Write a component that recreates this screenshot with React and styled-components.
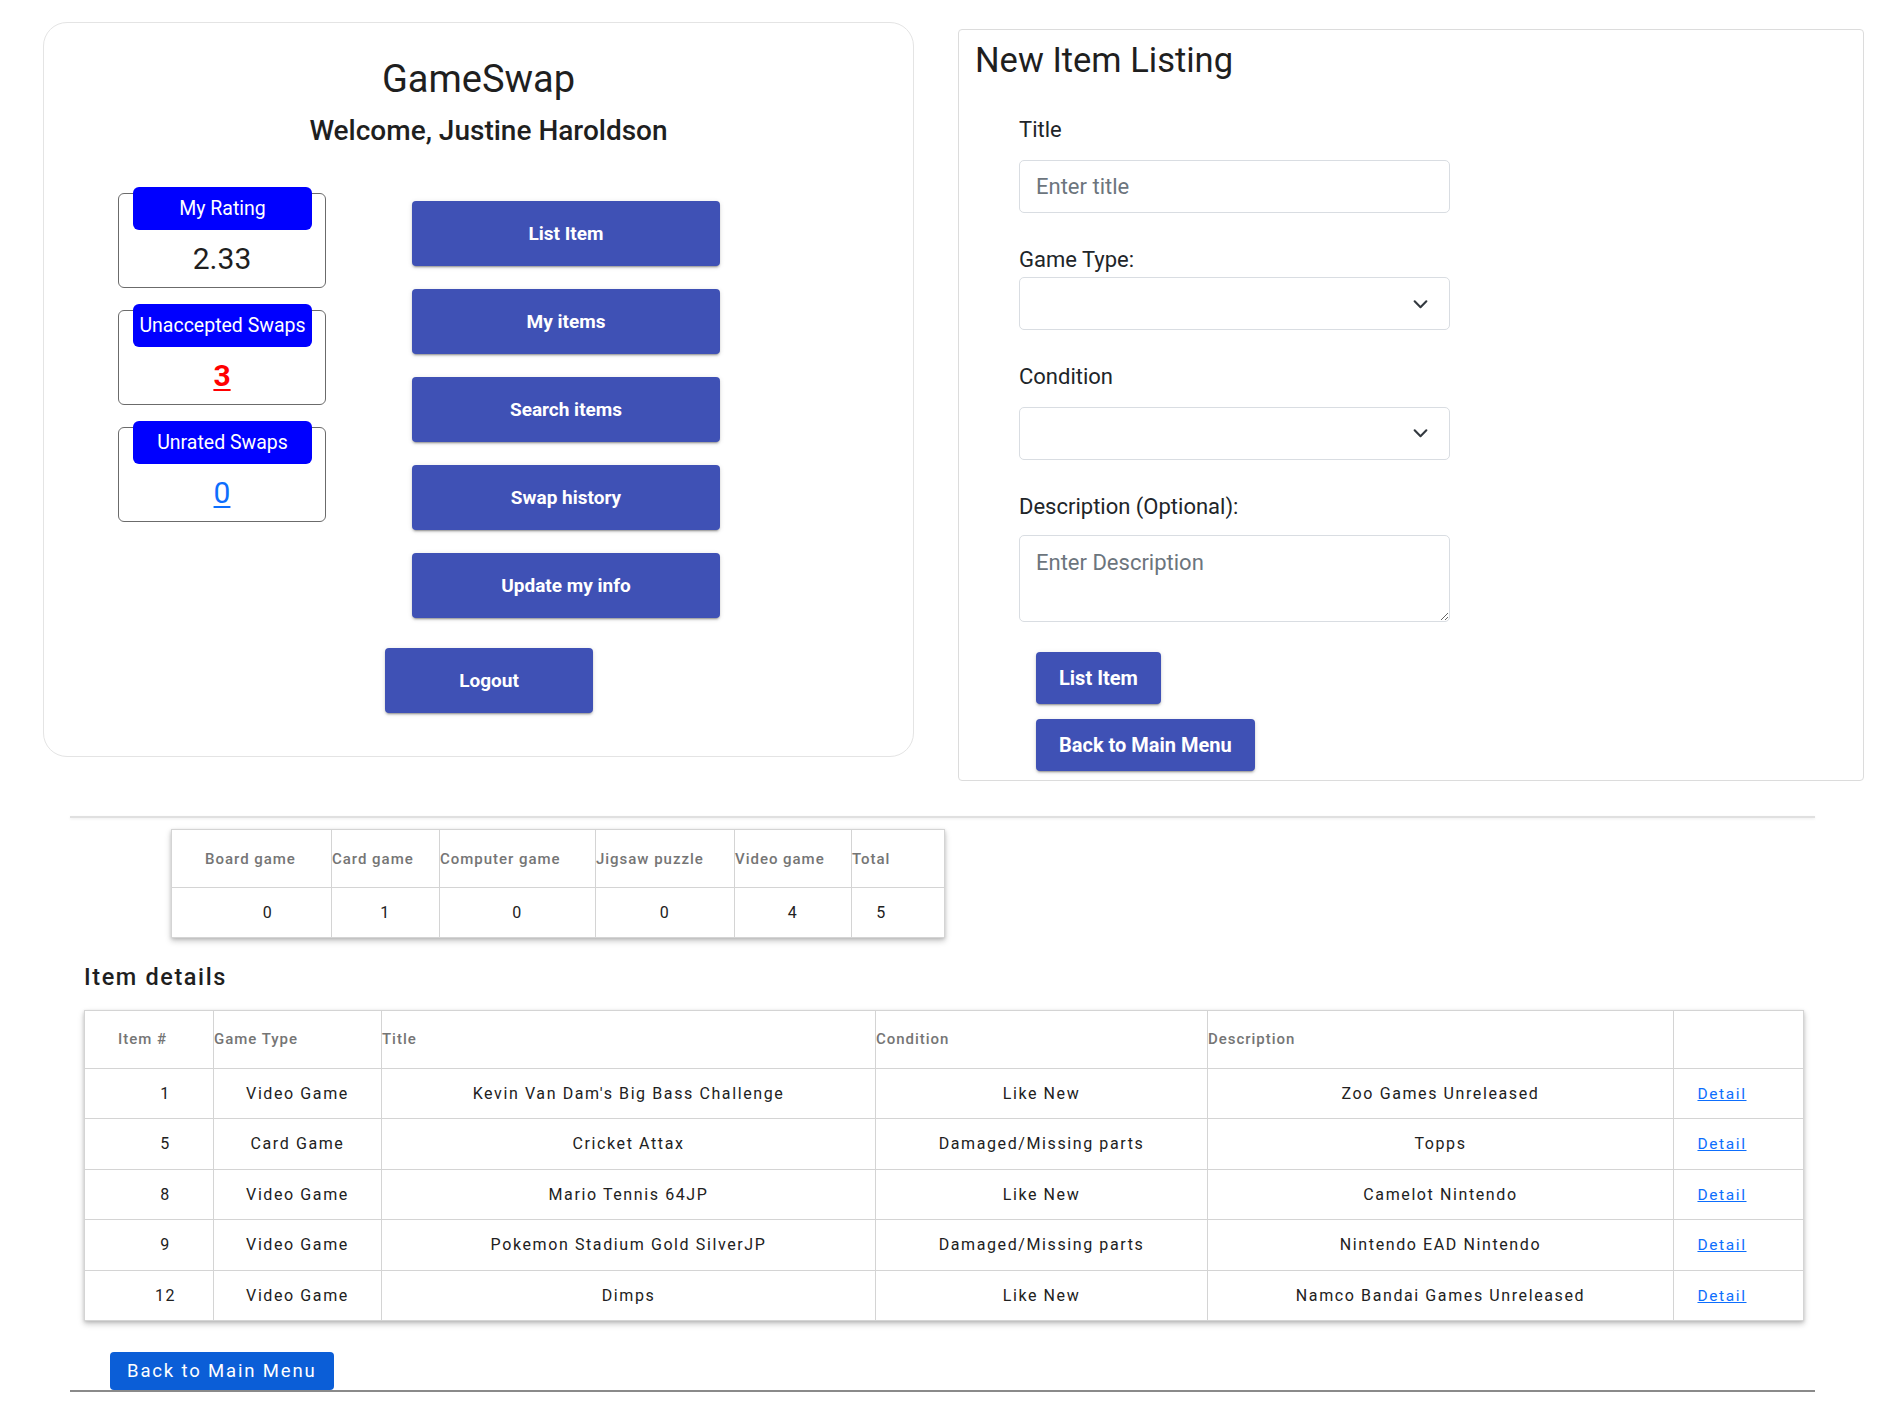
import React from 'react';
import styled, { createGlobalStyle } from 'styled-components';

const GlobalStyle = createGlobalStyle`
  html, body { margin: 0; padding: 0; background: #ffffff; }
  body {
    font-family: Roboto, "Noto Sans", "Liberation Sans", sans-serif;
    color: #212529;
  }
  *, *::before, *::after { box-sizing: border-box; }
`;

const Page = styled.div`
  width: 1890px;
  padding-bottom: 20px;
`;

const TopRow = styled.div`
  display: flex;
  align-items: flex-start;
  gap: 44px;
  padding: 22px 0 0 43px;
`;

/* ---------- left menu card ---------- */
const MenuCard = styled.section`
  width: 871px;
  height: 735px;
  border: 1px solid #e4e4e4;
  border-radius: 24px;
  padding-top: 34px;
  display: flex;
  flex-direction: column;
`;

const AppTitle = styled.h1`
  margin: 0;
  font-size: 38px;
  font-weight: 400;
  line-height: 1.2;
  text-align: center;
  color: #1f1f1f;
`;

const Welcome = styled.h2`
  margin: 11px 0 0 20px;
  font-size: 28px;
  font-weight: 500;
  line-height: 1.2;
  text-align: center;
  color: #1f1f1f;
`;

const MenuBody = styled.div`
  display: flex;
  align-items: flex-start;
  margin-top: 46px;
  padding-left: 74px;
`;

const StatColumn = styled.div`
  display: flex;
  flex-direction: column;
  gap: 22px;
`;

const StatBox = styled.div`
  width: 208px;
  height: 95px;
  border: 1.5px solid #6b6b6b;
  border-radius: 6px;
  display: flex;
  flex-direction: column;
  align-items: flex-start;
`;

const StatLabel = styled.div`
  margin: -7.5px 0 0 14px;
  width: 179px;
  height: 43px;
  background: #0000ff;
  color: #ffffff;
  border-radius: 6px;
  font-size: 19.5px;
  white-space: nowrap;
  display: flex;
  align-items: center;
  justify-content: center;
`;

const StatValue = styled.div`
  align-self: stretch;
  margin-top: 11px;
  text-align: center;
  font-size: 30px;
  line-height: 1.2;
  color: #1f1f1f;
`;

const StatLink = styled.span`
  color: ${(p) => p.$color};
  font-weight: ${(p) => (p.$bold ? 700 : 400)};
  text-decoration: underline;
  text-decoration-thickness: 2px;
  text-underline-offset: 3px;
`;

const ButtonColumn = styled.div`
  display: flex;
  flex-direction: column;
  gap: 23px;
  margin: 8px 0 0 86px;
`;

const RaisedButton = styled.button`
  display: flex;
  align-items: center;
  justify-content: center;
  width: ${(p) => (p.$width ? `${p.$width}px` : 'auto')};
  height: ${(p) => p.$height || 65}px;
  padding: 0 23px;
  background: #3f51b5;
  color: #ffffff;
  border: 0;
  border-radius: 4px;
  font-family: inherit;
  font-size: ${(p) => p.$size || 19}px;
  font-weight: 700;
  cursor: pointer;
  box-shadow: 0 3px 1px -2px rgba(0, 0, 0, 0.2), 0 2px 2px 0 rgba(0, 0, 0, 0.14),
    0 1px 5px 0 rgba(0, 0, 0, 0.12);
`;

const LogoutRow = styled.div`
  margin: 30px 0 0 341px;
`;

/* ---------- right form card ---------- */
const FormCard = styled.section`
  width: 906px;
  height: 752px;
  margin-top: 7px;
  border: 1px solid #dcdcdc;
  border-radius: 4px;
  padding: 10px 0 0 16px;
`;

const FormTitle = styled.h2`
  margin: 0;
  font-size: 34.5px;
  font-weight: 400;
  line-height: 1.2;
  color: #1f1f1f;
`;

const Form = styled.form`
  display: flex;
  flex-direction: column;
  align-items: flex-start;
  padding-left: 44px;
`;

const FieldLabel = styled.label`
  display: block;
  margin-top: ${(p) => p.$top}px;
  margin-bottom: ${(p) => p.$bottom}px;
  font-size: 22px;
  line-height: 1.2;
  color: #212529;
`;

const TextInput = styled.input`
  display: block;
  width: 431px;
  height: 53px;
  border: 1px solid #d9dde2;
  border-radius: 5px;
  padding: 0 16px;
  font-family: inherit;
  font-size: 22px;
  color: #212529;
  background: #fff;
  &::placeholder { color: #6c757d; }
`;

const SelectWrap = styled.div`
  position: relative;
  width: 431px;
  height: 53px;
`;

const NativeSelect = styled.select`
  appearance: none;
  -webkit-appearance: none;
  display: block;
  width: 100%;
  height: 100%;
  border: 1px solid #d9dde2;
  border-radius: 5px;
  padding: 0 16px;
  background: #fff;
  font-family: inherit;
  font-size: 22px;
`;

const Chevron = styled.svg`
  position: absolute;
  right: 21px;
  top: 50%;
  width: 17px;
  height: 17px;
  transform: translateY(-50%);
  pointer-events: none;
`;

const TextArea = styled.textarea`
  display: block;
  width: 431px;
  height: 87px;
  border: 1px solid #d9dde2;
  border-radius: 5px;
  padding: 10px 16px 8px;
  font-family: inherit;
  font-size: 22px;
  line-height: 1.5;
  resize: vertical;
  &::placeholder { color: #6c757d; }
`;

const FormButtons = styled.div`
  display: flex;
  flex-direction: column;
  align-items: flex-start;
  gap: 15px;
  margin: 30px 0 0 17px;
`;

/* ---------- bottom report ---------- */
const Report = styled.div`
  width: 1745px;
  margin: 35px 0 0 70px;
  letter-spacing: 0.1em;
`;

const SoftRule = styled.div`
  height: 2px;
  background: #e0e0e0;
  box-shadow: 0 1px 3px rgba(0, 0, 0, 0.08);
`;

const GridTable = styled.table`
  border-collapse: collapse;
  table-layout: fixed;
  width: ${(p) => p.$width}px;
  margin: ${(p) => p.$margin};
  background: #fff;
  box-shadow: 0 3px 6px rgba(0, 0, 0, 0.22), 0 1px 3px rgba(0, 0, 0, 0.12);

  th, td {
    border: 1px solid #d4d4d4;
    padding: 0;
  }
  th:first-child, td:first-child { padding-left: 33px; }
  th:last-child, td:last-child { padding-right: 33px; }
`;

const HeadRow = styled.tr`
  height: 58px;
`;

const HeadCell = styled.th`
  text-align: left;
  font-size: 15px;
  font-weight: 500;
  color: #757575;
  letter-spacing: 0.065em;
  white-space: nowrap;
`;

const BodyRow = styled.tr`
  height: ${(p) => p.$height}px;
`;

const BodyCell = styled.td`
  text-align: center;
  font-size: 16px;
  color: #212121;
  white-space: nowrap;
`;

const DetailLink = styled.a`
  color: #0d6efd;
  text-decoration: underline;
  font-size: 15.5px;
  cursor: pointer;
`;

const SectionHeading = styled.h3`
  margin: 25px 0 0 14px;
  font-size: 23.5px;
  font-weight: 500;
  line-height: 1.2;
  color: #1f1f1f;
`;

const PrimaryButton = styled.button`
  display: block;
  height: 38px;
  margin: 31px 0 0 40px;
  padding: 0 17px;
  background: #0b5ed7;
  color: #fff;
  border: 0;
  border-radius: 4px;
  font-family: inherit;
  font-size: 18.5px;
  letter-spacing: 0.1em;
  cursor: pointer;
`;

const BottomRule = styled.div`
  height: 2px;
  background: #8a8a8a;
`;

const summaryCols = [160, 108, 156, 139, 117, 93];
const summaryHead = ['Board game', 'Card game', 'Computer game', 'Jigsaw puzzle', 'Video game', 'Total'];
const summaryRow = [0, 1, 0, 0, 4, 5];

const itemCols = [129, 168, 494, 332, 466, 130];
const itemHead = ['Item #', 'Game Type', 'Title', 'Condition', 'Description', ''];
const items = [
  [1, 'Video Game', "Kevin Van Dam's Big Bass Challenge", 'Like New', 'Zoo Games Unreleased'],
  [5, 'Card Game', 'Cricket Attax', 'Damaged/Missing parts', 'Topps'],
  [8, 'Video Game', 'Mario Tennis 64JP', 'Like New', 'Camelot Nintendo'],
  [9, 'Video Game', 'Pokemon Stadium Gold SilverJP', 'Damaged/Missing parts', 'Nintendo EAD Nintendo'],
  [12, 'Video Game', 'Dimps', 'Like New', 'Namco Bandai Games Unreleased'],
];

const ChevronIcon = () => (
  <Chevron viewBox="0 0 16 16" fill="none">
    <path d="M2.5 5.5 8 11l5.5-5.5" stroke="#343a40" strokeWidth="2" strokeLinecap="round" strokeLinejoin="round" />
  </Chevron>
);

export default function App() {
  return (
    <Page>
      <GlobalStyle />
      <TopRow>
        <MenuCard>
          <AppTitle>GameSwap</AppTitle>
          <Welcome>Welcome, Justine Haroldson</Welcome>
          <MenuBody>
            <StatColumn>
              <StatBox>
                <StatLabel>My Rating</StatLabel>
                <StatValue>2.33</StatValue>
              </StatBox>
              <StatBox>
                <StatLabel>Unaccepted Swaps</StatLabel>
                <StatValue>
                  <StatLink $color="#ff0000" $bold>3</StatLink>
                </StatValue>
              </StatBox>
              <StatBox>
                <StatLabel>Unrated Swaps</StatLabel>
                <StatValue>
                  <StatLink $color="#0d6efd">0</StatLink>
                </StatValue>
              </StatBox>
            </StatColumn>
            <ButtonColumn>
              <RaisedButton $width={308}>List Item</RaisedButton>
              <RaisedButton $width={308}>My items</RaisedButton>
              <RaisedButton $width={308}>Search items</RaisedButton>
              <RaisedButton $width={308}>Swap history</RaisedButton>
              <RaisedButton $width={308}>Update my info</RaisedButton>
            </ButtonColumn>
          </MenuBody>
          <LogoutRow>
            <RaisedButton $width={208}>Logout</RaisedButton>
          </LogoutRow>
        </MenuCard>

        <FormCard>
          <FormTitle>New Item Listing</FormTitle>
          <Form onSubmit={(e) => e.preventDefault()}>
            <FieldLabel $top={36} $bottom={16}>Title</FieldLabel>
            <TextInput placeholder="Enter title" />
            <FieldLabel $top={34} $bottom={4}>Game Type:</FieldLabel>
            <SelectWrap>
              <NativeSelect defaultValue="">
                <option value=""></option>
                <option>Board game</option>
                <option>Card game</option>
                <option>Computer game</option>
                <option>Jigsaw puzzle</option>
                <option>Video game</option>
              </NativeSelect>
              <ChevronIcon />
            </SelectWrap>
            <FieldLabel $top={34} $bottom={16}>Condition</FieldLabel>
            <SelectWrap>
              <NativeSelect defaultValue="">
                <option value=""></option>
                <option>Mint</option>
                <option>Like New</option>
                <option>Lightly Used</option>
                <option>Moderately Used</option>
                <option>Heavily Used</option>
                <option>Damaged/Missing parts</option>
              </NativeSelect>
              <ChevronIcon />
            </SelectWrap>
            <FieldLabel $top={34} $bottom={15}>Description (Optional):</FieldLabel>
            <TextArea placeholder="Enter Description" />
            <FormButtons>
              <RaisedButton $height={52} $size={20}>List Item</RaisedButton>
              <RaisedButton $height={52} $size={20}>Back to Main Menu</RaisedButton>
            </FormButtons>
          </Form>
        </FormCard>
      </TopRow>

      <Report>
        <SoftRule />
        <GridTable $width={773} $margin="11px 0 0 101px">
          <colgroup>
            {summaryCols.map((w, i) => (
              <col key={i} style={{ width: w }} />
            ))}
          </colgroup>
          <thead>
            <HeadRow>
              {summaryHead.map((h) => (
                <HeadCell key={h}>{h}</HeadCell>
              ))}
            </HeadRow>
          </thead>
          <tbody>
            <BodyRow $height={50}>
              {summaryRow.map((v, i) => (
                <BodyCell key={i}>{v}</BodyCell>
              ))}
            </BodyRow>
          </tbody>
        </GridTable>

        <SectionHeading>Item details</SectionHeading>

        <GridTable $width={1719} $margin="18.5px 0 0 14px">
          <colgroup>
            {itemCols.map((w, i) => (
              <col key={i} style={{ width: w }} />
            ))}
          </colgroup>
          <thead>
            <HeadRow>
              {itemHead.map((h, i) => (
                <HeadCell key={i}>{h}</HeadCell>
              ))}
            </HeadRow>
          </thead>
          <tbody>
            {items.map((row) => (
              <BodyRow key={row[0]} $height={50.5}>
                {row.map((v, i) => (
                  <BodyCell key={i}>{v}</BodyCell>
                ))}
                <BodyCell>
                  <DetailLink>Detail</DetailLink>
                </BodyCell>
              </BodyRow>
            ))}
          </tbody>
        </GridTable>

        <PrimaryButton>Back to Main Menu</PrimaryButton>
        <BottomRule />
      </Report>
    </Page>
  );
}
